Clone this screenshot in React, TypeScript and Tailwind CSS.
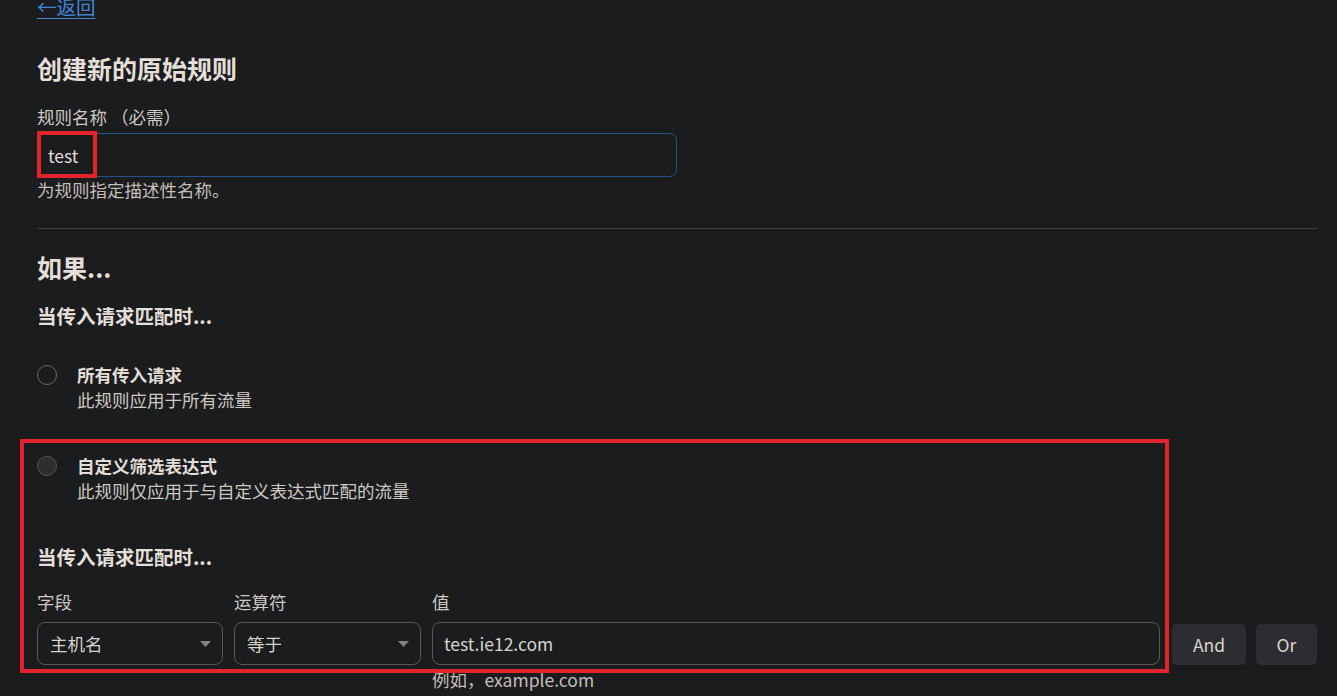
import React from "react";

const font = { fontFamily: '"Noto Sans CJK SC", "Noto Sans", sans-serif' };

function Caret() {
  return (
    <svg width="11" height="6" viewBox="0 0 11 6" className="shrink-0">
      <path d="M0 0 L11 0 L5.5 6 Z" fill="#85847f" />
    </svg>
  );
}

function Radio({ filled }: { filled?: boolean }) {
  return (
    <div
      className={`mt-[3.5px] h-[20px] w-[20px] shrink-0 rounded-full border ${
        filled ? "border-[#55544f] bg-[#2c2d2f]" : "border-[#6b6a66] bg-transparent"
      }`}
    />
  );
}

export default function App() {
  return (
    <div
      className="min-h-[696px] w-[1337px] overflow-hidden bg-[#1b1c1e] pl-[37px] pr-[20px] text-[17.5px] leading-[25px] text-[#cdc8c1]"
      style={font}
    >
      <div className="-mt-[6px] h-[26px] text-[19.5px] leading-[26px]">
        <a className="text-[#3f86d8] underline underline-offset-[3px]" href="#">
          ←返回
        </a>
      </div>

      <h1 className="mt-[32px] text-[25px] font-bold leading-[32px] text-[#e4dfd8]">
        创建新的原始规则
      </h1>

      <div className="mt-[19.5px]">规则名称 （必需）</div>
      <div className="relative mt-[4.5px] flex h-[44px] w-[640px] items-center rounded-[7px] border border-[#24528a] pl-[10px] text-[#e2ddd6]">
        test
        <div className="absolute -left-[1px] -top-[3px] h-[47px] w-[60px] border-[4px] border-[#e3222b]" />
      </div>
      <div className="mt-0 text-[#c3beb7]">为规则指定描述性名称。</div>

      <div className="mt-[26px] h-px w-full bg-[#3d3d3d]" />

      <h2 className="mt-[22px] text-[25px] font-bold leading-[32px] text-[#e4dfd8]">如果...</h2>

      <h3 className="mt-[19px] text-[19.5px] font-bold leading-[28px] text-[#e4dfd8]">
        当传入请求匹配时...
      </h3>

      <div className="mt-[31.5px] flex gap-[20px]">
        <Radio />
        <div>
          <div className="font-bold text-[#e2ddd6]">所有传入请求</div>
          <div>此规则应用于所有流量</div>
        </div>
      </div>

      <div className="relative mt-[41px]">
        <div className="pointer-events-none absolute -left-[17px] -top-[13.5px] h-[234px] w-[1149px] border-[4px] border-[#e3222b]" />
        <div className="flex gap-[20px]">
          <Radio filled />
          <div>
            <div className="font-bold text-[#e2ddd6]">自定义筛选表达式</div>
            <div>此规则仅应用于与自定义表达式匹配的流量</div>
          </div>
        </div>

        <h3 className="mt-[40px] text-[19.5px] font-bold leading-[28px] text-[#e4dfd8]">
          当传入请求匹配时...
        </h3>

        <div className="mt-[18.5px] flex items-start">
          <div className="flex w-[186px] flex-col">
            <div>字段</div>
            <div className="mt-[8px] flex h-[43px] items-center justify-between rounded-[8px] border border-[#5a5853] pl-[12px] pr-[11px] text-[#d8d3cc]">
              主机名
              <Caret />
            </div>
          </div>
          <div className="ml-[11px] flex w-[187px] flex-col">
            <div>运算符</div>
            <div className="mt-[8px] flex h-[43px] items-center justify-between rounded-[8px] border border-[#5a5853] pl-[12px] pr-[11px] text-[#d8d3cc]">
              等于
              <Caret />
            </div>
          </div>
          <div className="ml-[11px] flex w-[728px] flex-col">
            <div>值</div>
            <div className="mt-[8px] flex h-[43px] items-center rounded-[8px] border border-[#5a5853] pl-[11px] text-[#d8d3cc]">
              test.ie12.com
            </div>
            <div className="mt-[2px] text-[#c3beb7]">例如，example.com</div>
          </div>
          <div className="ml-[12px] mt-[35px] flex gap-[10px]">
            <button className="flex h-[41px] w-[74px] items-center justify-center rounded-[5px] bg-[#2c2d30] text-[#d8d3cc]">
              And
            </button>
            <button className="flex h-[41px] w-[61px] items-center justify-center rounded-[5px] bg-[#2c2d30] text-[#d8d3cc]">
              Or
            </button>
          </div>
        </div>
      </div>
    </div>
  );
}
